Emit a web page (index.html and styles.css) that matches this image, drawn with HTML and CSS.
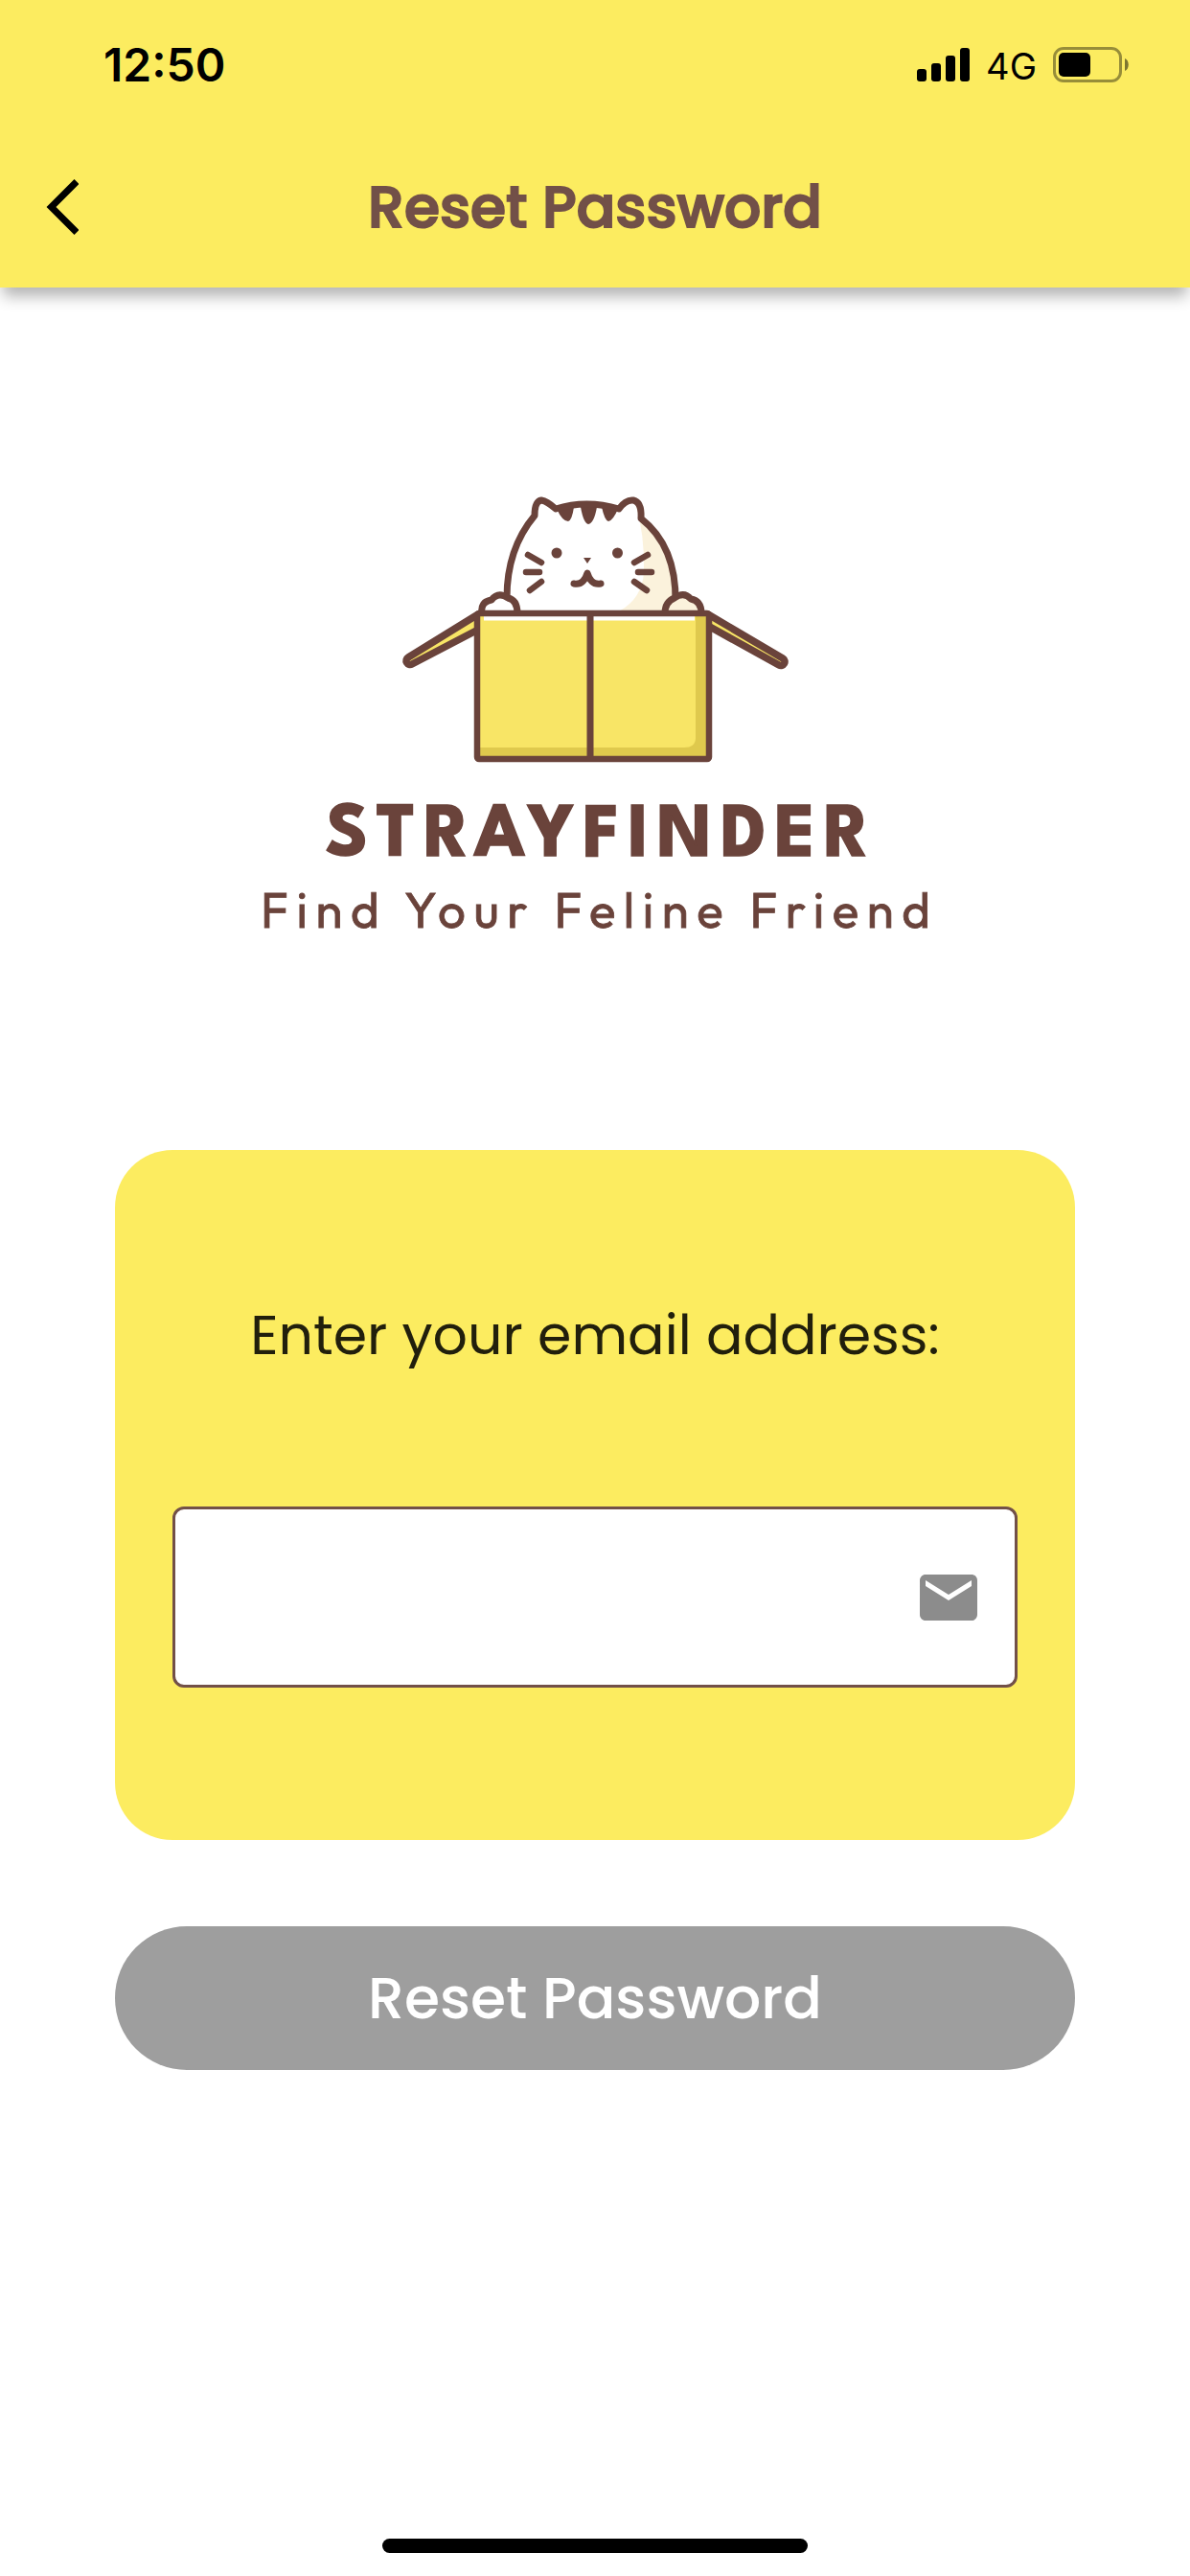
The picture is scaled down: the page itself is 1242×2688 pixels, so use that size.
FILE: index.html
```html
<!DOCTYPE html>
<html lang="en">
<head>
<meta charset="utf-8">
<title>Reset Password</title>
<link rel="stylesheet" href="styles.css">
</head>
<body>
<header class="top">
  <div class="status">
    <span class="time">12:50</span>
    <div class="indicators">
      <svg class="signal" viewBox="0 0 55 35" aria-hidden="true"><rect y="22" width="10" height="13" rx="3"/><rect x="15" y="16" width="10" height="19" rx="3"/><rect x="30" y="8" width="10" height="27" rx="3"/><rect x="45" width="10" height="35" rx="3"/></svg>
      <span class="network">4G</span>
      <svg class="battery" viewBox="0 0 79 37" aria-hidden="true"><rect x="1.5" y="1.5" width="69" height="34" rx="9.5" fill="none" stroke="#000" stroke-opacity=".4" stroke-width="3"/><rect x="6" y="6" width="33" height="25" rx="5"/><path d="M75 12c5 2 5 11 0 13z" fill-opacity=".5"/></svg>
    </div>
  </div>
  <div class="bar">
    <svg class="back" viewBox="0 0 35 60" aria-hidden="true"><path d="M33 3.500 6.500 30 33 56.500" fill="none" stroke="#000" stroke-width="7"/></svg>
    <h1 class="title">Reset Password</h1>
  </div>
</header>
<main class="content">
  <svg class="logo" viewBox="260 500 720 490" role="img" aria-label="StrayFinder">
    <path d="M529 628C528 592 536 562 557 538Q557 522 564 521Q570 521 579 531Q611 521 645 531Q652 521 660 522Q669 524 668 541Q705 570 704 628V638H529Z" fill="#fff"/>
    <path d="M662 524Q670 527 668 541Q705 570 704 638H645Q670 624 671 596Q672 558 662 524Z" fill="#fbf2dc"/>
    <path d="M580 531Q586 544 592 544Q596 543 598 529H605Q608 546 613 547Q619 546 622 529H627Q630 543 634 544Q639 543 644 531L626 526H602Z" fill="#6a433b"/>
    <g fill="none" stroke="#6a433b" stroke-width="7" stroke-linecap="round" stroke-linejoin="round">
      <path d="M528 624C528 592 536 563 557 538Q557 523 564 522Q570 523 579 531Q611 521 645 531Q652 521 660 522Q669 524 668 541Q705 570 704 628"/>
      <path d="M550 579l14 8M548 597h14M552 616l12-9M675 579l-14 8M679 597h-14M674 616l-13-9" stroke-width="6.500"/>
      <path d="M598 609Q608 611 612 598Q616 611 626 609"/>
    </g>
    <g fill="#6a433b"><circle cx="580" cy="577" r="5.500"/><circle cx="643.500" cy="577" r="5.500"/><path d="M608 582h8l-4 6z"/></g>
    <g stroke="#6a433b" stroke-width="7" stroke-linejoin="round">
      <path d="M502 640Q500 628 512 626Q519 617 529 624Q539 626 539 640" fill="#fff"/>
      <path d="M693 640Q693 628 703 624Q713 617 720 625Q731 627 731 640" fill="#fbf2dc"/>
    </g>
    <path d="M498 641 425 686a4 4 0 0 0 4 7L498 657Z" fill="#f8e566" stroke="#6a433b" stroke-width="7.500" stroke-linejoin="round"/>
    <path d="M738 641 816 687a4 4 0 0 1-4 7L738 653Z" fill="#f8e566" stroke="#6a433b" stroke-width="7.500" stroke-linejoin="round"/>
    <rect x="498" y="640" width="240" height="152" fill="#dfc94d"/>
    <path d="M500 642H725V770Q725 780 713 780H500Z" fill="#f8e566"/>
    <path d="M504 645H724" stroke="#fff" stroke-width="5"/>
    <rect x="497" y="640" width="242" height="152" rx="2" fill="none" stroke="#6a433b" stroke-width="6.500"/>
    <path d="M615 640V792" stroke="#6a433b" stroke-width="7"/>
    <text class="brand" x="339" y="893" textLength="567" lengthAdjust="spacing">STRAYFINDER</text>
    <text class="tagline" x="271" y="968" textLength="699" lengthAdjust="spacing">Find Your Feline Friend</text>
  </svg>
  <section class="card">
    <label class="prompt" for="email">Enter your email address:</label>
    <div class="field">
      <input class="input" id="email" type="email">
      <svg class="mail" viewBox="0 0 24 24" aria-hidden="true"><path d="M20 4H4c-1.100 0-1.990.9-1.990 2L2 18c0 1.100.9 2 2 2h16c1.100 0 2-.9 2-2V6c0-1.100-.9-2-2-2zm0 4-8 5-8-5V6l8 5 8-5v2z"/></svg>
    </div>
  </section>
  <button class="submit" type="button">Reset Password</button>
</main>
<div class="home"></div>
</body>
</html>
```
FILE: styles.css
```css
* { box-sizing: border-box; }
body {
  margin: 0;
  height: 2688px;
  display: flex;
  flex-direction: column;
  align-items: center;
  background: #fff;
  font-family: Poppins, Inter, sans-serif;
  overflow: hidden;
}
.top {
  width: 100%;
  height: 300px;
  background: #fcec60;
  box-shadow: 0 12px 15px -3px rgba(0, 0, 0, .3);
}
.status {
  height: 132px;
  padding: 2px 64px 0 108px;
  display: flex;
  justify-content: space-between;
  align-items: center;
  font-family: Inter, sans-serif;
}
.time { font-size: 48px; font-weight: 600; }
.indicators { display: flex; align-items: center; }
.signal { width: 55px; height: 35px; }
.network { margin: 3px 17px 0; font-size: 38px; line-height: 40px; }
.battery { width: 79px; height: 37px; }
.bar {
  height: 168px;
  padding: 0 47px;
  display: grid;
  grid-template-columns: 60px 1fr 60px;
  align-items: center;
}
.back { width: 35px; height: 60px; }
.title {
  margin: 0;
  text-align: center;
  color: #725048;
  font-size: 60px;
  font-weight: 500;
  -webkit-text-stroke: 2px #725048;
  white-space: nowrap;
}
.content {
  width: 1002px;
  display: flex;
  flex-direction: column;
  align-items: center;
}
.logo { margin-top: 200px; width: 720px; height: 490px; }
.brand { font: 700 79px "League Spartan", Jost, "Josefin Sans", Poppins, Lato, sans-serif; fill: #6a433b; stroke: #6a433b; stroke-width: 1.5px; }
.tagline { font: 400 51px "Glacial Indifference", Outfit, Urbanist, Lato, sans-serif; fill: #6a433b; stroke: #6a433b; stroke-width: .8px; }
.card {
  margin-top: 210px;
  width: 100%;
  height: 720px;
  padding: 153px 60px 0;
  border-radius: 60px;
  background: #fcec60;
  display: flex;
  flex-direction: column;
  align-items: center;
}
.prompt { font-size: 57px; line-height: 80px; color: #211f0c; white-space: nowrap; }
.field {
  margin-top: 139px;
  width: 100%;
  height: 189px;
  padding: 0 33px;
  border: 3px solid #725048;
  border-radius: 12px;
  background: #fff;
  display: flex;
  align-items: center;
}
.input { flex: 1; min-width: 0; height: 100%; border: 0; outline: 0; background: none; font: inherit; font-size: 48px; }
.mail { flex: none; width: 72px; height: 72px; fill: #8c8c8c; }
.submit {
  margin-top: 90px;
  width: 100%;
  height: 150px;
  border: 0;
  border-radius: 75px;
  background: #9e9e9e;
  color: #fff;
  font: 500 60px Poppins, Inter, sans-serif;
}
.home { margin-top: auto; margin-bottom: 24px; width: 444px; height: 15px; border-radius: 8px; background: #000; }
```
